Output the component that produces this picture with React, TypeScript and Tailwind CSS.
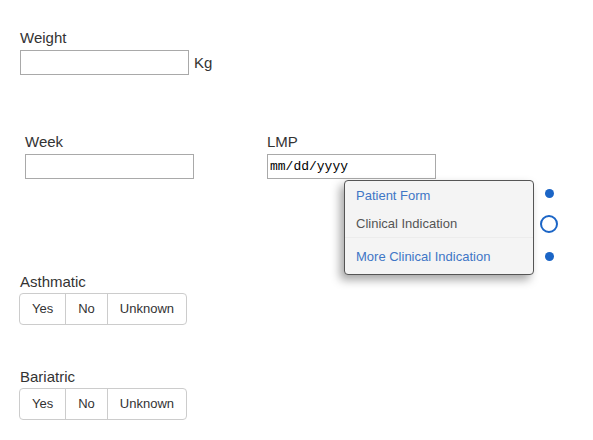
import React from "react";

const labelCls = "text-[15px] leading-[18px] text-[#333]";
const inputCls = "block w-[169px] h-[25px] border border-[#a9a9a9] bg-white outline-none";

function ChoiceGroup() {
  const opts = ["Yes", "No", "Unknown"];
  return (
    <div className="mt-[2px] flex w-max h-[32px] rounded-[4px] border border-[#cccccc] bg-white">
      {opts.map((o, i) => (
        <button
          key={o}
          className={`px-3 text-[13px] text-[#333] ${i > 0 ? "border-l border-[#cccccc]" : ""}`}
        >
          {o}
        </button>
      ))}
    </div>
  );
}

export default function App() {
  return (
    <div className="relative w-[593px] h-[440px] overflow-hidden bg-white font-['Liberation_Sans',Arial,sans-serif]">
      {/* Weight */}
      <div className="pt-[29px] pl-[20px]">
        <div className={labelCls}>Weight</div>
        <div className="mt-[3px] flex items-center gap-[5px]">
          <input className={inputCls} />
          <span className="text-[15px] leading-[18px] text-[#333]">Kg</span>
        </div>
      </div>

      {/* Week / LMP */}
      <div className="mt-[58px] flex pl-[25px] gap-[73px]">
        <div>
          <div className={labelCls}>Week</div>
          <input className={`mt-[3px] ${inputCls}`} />
        </div>
        <div>
          <div className={labelCls}>LMP</div>
          <div className="mt-[3px] flex items-center w-[169px] h-[25px] border border-[#a9a9a9] bg-white pl-[2px] font-['Liberation_Mono',monospace] text-[13px] text-black">
            mm/dd/yyyy
          </div>
        </div>
      </div>

      {/* Asthmatic */}
      <div className="mt-[94px] pl-[19px]">
        <div className={`${labelCls} pl-[1px]`}>Asthmatic</div>
        <ChoiceGroup />
      </div>

      {/* Bariatric */}
      <div className="mt-[43px] pl-[19px]">
        <div className={`${labelCls} pl-[1px]`}>Bariatric</div>
        <ChoiceGroup />
      </div>

      {/* Section nav popup */}
      <div className="absolute left-[344px] top-[180px] w-[190px] h-[95px] rounded-[4px] border border-[#555] bg-[#f4f4f4] shadow-[-4px_5px_10px_rgba(0,0,0,0.35)] text-[13px]">
        <div className="h-[30px] flex items-center pl-[11px] text-[#3f76c6]">Patient Form</div>
        <div className="h-[26px] flex items-center pl-[11px] text-[#555]">Clinical Indication</div>
        <div className="h-px bg-[#ececec]" />
        <div className="h-[37px] flex items-center pl-[11px] text-[#3f76c6]">More Clinical Indication</div>
      </div>

      {/* Dots */}
      <div className="absolute left-[545px] top-[189px] w-[9px] h-[9px] rounded-full bg-[#1b65c6]" />
      <div className="absolute left-[540px] top-[215px] w-[18px] h-[18px] rounded-full border-2 border-[#1b65c6] bg-white" />
      <div className="absolute left-[545px] top-[252px] w-[9px] h-[9px] rounded-full bg-[#1b65c6]" />
    </div>
  );
}
